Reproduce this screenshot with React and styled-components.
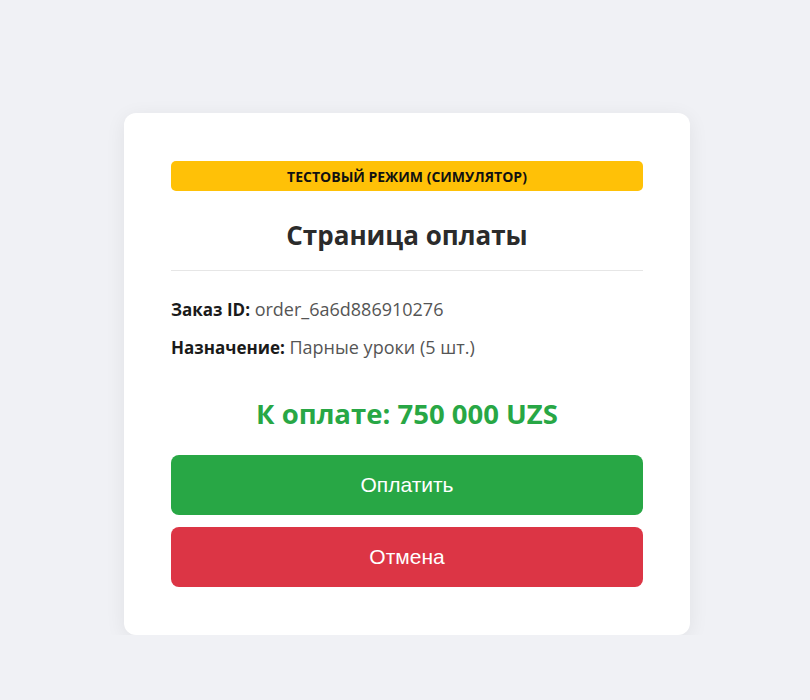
import React from "react";
import styled, { createGlobalStyle } from "styled-components";

const GlobalStyle = createGlobalStyle`
  html, body {
    margin: 0;
    padding: 0;
    background: #f0f1f5;
  }
  body {
    font-family: "Open Sans", "Noto Sans", sans-serif;
    color: #333;
  }
`;

const Page = styled.div`
  display: flex;
  justify-content: center;
  padding-top: 113px;
  padding-left: 4px;
`;

const Card = styled.div`
  width: 566px;
  box-sizing: border-box;
  padding: 48px 47px 48px;
  background: #ffffff;
  border-radius: 12px;
  box-shadow: 0 4px 20px rgba(0, 0, 0, 0.07);
`;

const Banner = styled.div`
  height: 30px;
  display: flex;
  align-items: center;
  justify-content: center;
  background: #ffc107;
  border-radius: 5px;
  font-size: 14px;
  font-weight: 700;
  color: #111;
  text-transform: uppercase;
`;

const Title = styled.h2`
  margin: 0;
  padding: 26px 0 17px;
  text-align: center;
  font-size: 26px;
  font-weight: 700;
  color: #2b2b2b;
  border-bottom: 1px solid #e6e6e6;
`;

const Details = styled.div`
  display: flex;
  flex-direction: column;
  gap: 13px;
  padding-top: 26px;
`;

const Line = styled.div`
  font-size: 18px;
  line-height: 25px;
  color: #555;
`;

const Label = styled.b`
  font-size: 17px;
  color: #1a1a1a;
  font-weight: 700;
`;

const Amount = styled.div`
  margin: 35px 0 23px;
  text-align: center;
  font-size: 27.5px;
  font-weight: 700;
  color: #28a745;
`;

const Actions = styled.div`
  display: flex;
  flex-direction: column;
  gap: 12px;
`;

const Button = styled.button`
  height: 60px;
  width: 100%;
  border: none;
  border-radius: 8px;
  background: ${(p) => (p.$variant === "danger" ? "#dc3545" : "#28a745")};
  color: #fff;
  font-family: "Liberation Sans", Arial, sans-serif;
  font-size: 21px;
  cursor: pointer;
`;

export default function App() {
  return (
    <>
      <GlobalStyle />
      <Page>
        <Card>
          <Banner>Тестовый режим (симулятор)</Banner>
          <Title>Страница оплаты</Title>
          <Details>
            <Line>
              <Label>Заказ ID:</Label> order_6a6d886910276
            </Line>
            <Line>
              <Label>Назначение:</Label> Парные уроки (5 шт.)
            </Line>
          </Details>
          <Amount>К оплате: 750 000 UZS</Amount>
          <Actions>
            <Button>Оплатить</Button>
            <Button $variant="danger">Отмена</Button>
          </Actions>
        </Card>
      </Page>
    </>
  );
}
